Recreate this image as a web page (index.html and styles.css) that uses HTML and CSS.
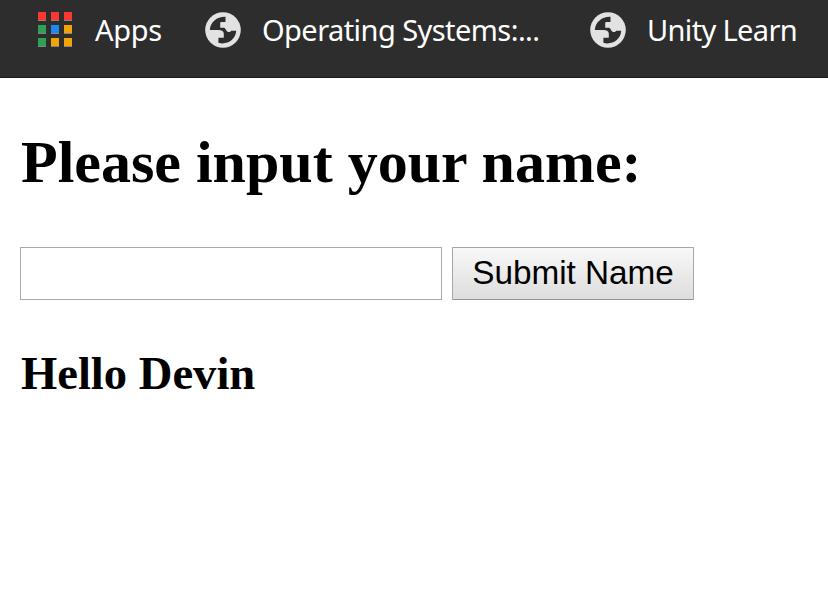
FILE: index.html
```html
<!DOCTYPE html>
<html lang="en">
<head>
<meta charset="utf-8">
<title>Name form</title>
<link rel="stylesheet" href="styles.css">
</head>
<body>
<svg class="defs" width="0" height="0" aria-hidden="true">
  <symbol id="globe" viewBox="0 0 36 36">
    <circle cx="18" cy="18" r="17.8" fill="#e2e2e2"/>
    <path fill="#2d2d2d" d="M20.5 4.8C12 4.5 5.6 10 4.8 17.9H13.5C17 17.9 18.8 19.2 18.8 21.8V25.8H13.4V30.8C21.5 33.2 30.8 28 31.2 18.8H26.2C25 20.9 22 20.3 21.1 17.9C20.4 16.2 19.6 15.7 18 15.7H15.2V11.4C15.2 10.3 15.6 10 16.6 10H20.5Z"/>
  </symbol>
</svg>
<nav class="bookmarks">
  <a class="bookmark apps">
    <span class="grid"><i class="red"></i><i class="red"></i><i class="red"></i><i class="green"></i><i class="blue"></i><i class="yellow"></i><i class="green"></i><i class="yellow"></i><i class="yellow"></i></span>
    <span class="label">Apps</span>
  </a>
  <a class="bookmark systems"><svg class="globe"><use href="#globe"/></svg><span class="label">Operating Systems:...</span></a>
  <a class="bookmark unity"><svg class="globe"><use href="#globe"/></svg><span class="label">Unity Learn</span></a>
</nav>
<main>
  <h2>Please input your name:</h2>
  <form class="form">
    <input type="text" aria-label="Name">
    <button type="button">Submit Name</button>
  </form>
  <h3>Hello Devin</h3>
</main>
</body>
</html>
```
FILE: styles.css
```css
* { box-sizing: border-box; }
body { margin: 0; background: #fff; color: #000; font-family: "Liberation Serif", serif; overflow: hidden; }
.defs { display: block; }
.bookmarks {
  display: flex;
  height: 78px;
  padding: 10px 0 0 38px;
  background: #2d2d2d;
  border-bottom: 1px solid #1b1b1b;
  color: #fff;
  font: 29px/40px "Noto Sans", sans-serif;
  white-space: nowrap;
}
.bookmark { display: flex; height: 40px; align-items: center; flex: none; }
.apps { width: 167px; gap: 23px; }
.systems { width: 385px; gap: 21px; }
.unity { gap: 21px; }
.grid { display: grid; grid-template-columns: repeat(3, 8px); grid-auto-rows: 9px; column-gap: 5px; row-gap: 4px; margin-bottom: 2px; }
.grid i { border-bottom: 1px solid #858585; }
.red { background: #f9382f; }
.green { background: #30a154; }
.blue { background: #1d87f2; }
.yellow { background: #f2a506; }
.globe { width: 36px; height: 36px; }
.label { letter-spacing: -0.3px; }
.systems .label { letter-spacing: -0.56px; }
.unity .label { letter-spacing: -0.64px; }
main { padding: 0 20px; }
h2 { margin: 50px 0 0 1px; font-size: 60px; line-height: 69px; }
.form { display: flex; gap: 10px; margin-top: 50px; }
input { width: 422px; height: 53px; border: 1px solid #a9a9a9; padding: 3px; background: #fff; font: 33.33px "Liberation Sans", sans-serif; outline: none; }
button {
  width: 242px;
  height: 53px;
  padding: 0 0 2px;
  border: 1px solid #a6a6a6;
  border-bottom-color: #949494;
  border-radius: 1px;
  background: linear-gradient(#f8f8f8, #ddd);
  color: #000;
  font: 33.33px/49px "Liberation Sans", sans-serif;
  letter-spacing: -0.05px;
}
h3 { margin: 46px 0 0 1px; font-size: 46.6px; line-height: 54px; }
```
